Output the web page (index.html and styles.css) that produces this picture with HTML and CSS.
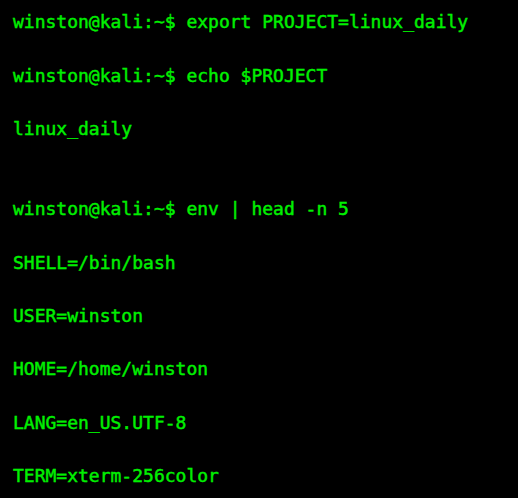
FILE: index.html
```html
<!DOCTYPE html>
<html lang="en">
<head>
<meta charset="utf-8">
<title>Terminal</title>
<link rel="stylesheet" href="styles.css">
</head>
<body>
<div class="term">
  <div class="line">winston@kali:~$ export PROJECT=linux_daily</div>
  <div class="line">winston@kali:~$ echo $PROJECT</div>
  <div class="line gap-after">linux_daily</div>
  <div class="line">winston@kali:~$ env | head -n 5</div>
  <div class="line">SHELL=/bin/bash</div>
  <div class="line">USER=winston</div>
  <div class="line">HOME=/home/winston</div>
  <div class="line">LANG=en_US.UTF-8</div>
  <div class="line">TERM=xterm-256color</div>
</div>
</body>
</html>
```
FILE: styles.css
```css
html, body {
  margin: 0;
  padding: 0;
  background: #000;
  height: 100%;
}
.term {
  display: flex;
  flex-direction: column;
  gap: 26.7px;
  padding: 9.4px 13px 0;
  font-family: "DejaVu Sans Mono", monospace;
  font-weight: normal;
  -webkit-text-stroke: 0.45px #00f000;
  font-size: 18px;
  line-height: 26.7px;
  color: #00f000;
  white-space: pre;
}
.gap-after {
  margin-bottom: 26.7px;
}
```
